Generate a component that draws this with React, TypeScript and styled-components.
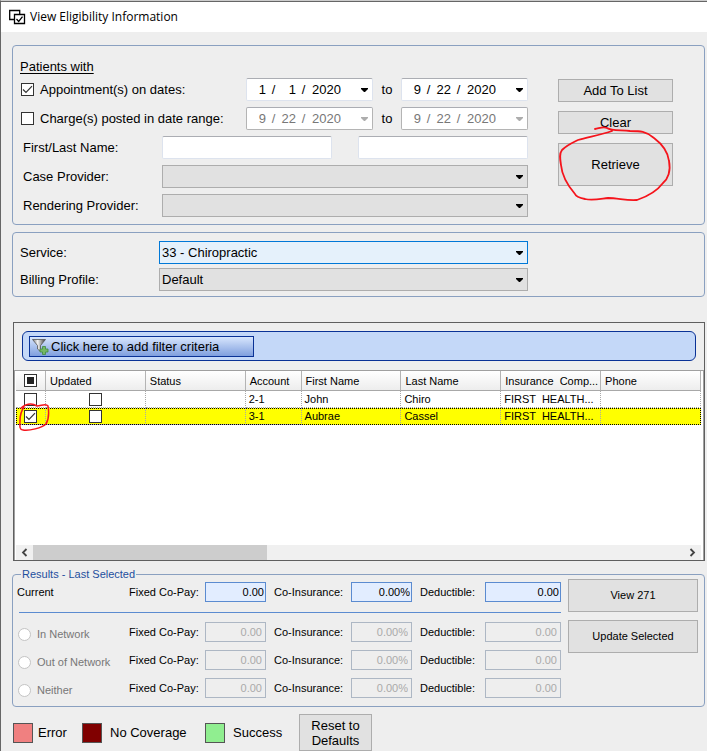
import React from 'react';
import styled, { createGlobalStyle } from 'styled-components';

const GlobalStyle = createGlobalStyle`
  *, *::before, *::after { box-sizing: border-box; }
  html, body { margin: 0; padding: 0; }
  body { background: #eee; color: #000; font: 13px/16px "Liberation Sans", Arial, sans-serif; }
  input, select, button { font: inherit; color: inherit; margin: 0; border-radius: 0; }
`;

/* ---------- window frame ---------- */

const Window = styled.div`
  display: flex;
  flex-direction: column;
  min-height: 100vh;
  border-left: 1px solid #666;
  border-top: 1px solid #ccc;
`;

const TitleBar = styled.header`
  display: flex;
  align-items: center;
  gap: 4px;
  height: 31px;
  padding-left: 8px;
  background: #fff;
  border-top: 1px solid #666;
`;

const Title = styled.h1`
  margin: 0;
  font: 400 12px/16px "Open Sans", "Noto Sans", sans-serif;
`;

const Body = styled.main`
  display: flex;
  flex-direction: column;
  flex: 1;
  padding: 13px 2px 0 11px;
`;

const Panel = styled.section`
  display: flex;
  border: 1px solid #8aa0c0;
  border-radius: 4px;
`;

/* ---------- form controls ---------- */

const Button = styled.button<{ $height: number; $small?: boolean }>`
  height: ${(p) => p.$height}px;
  padding: 0 6px;
  border: 1px solid #adadad;
  background: #e1e1e1;
  font-size: ${(p) => (p.$small ? 11 : 13)}px;
  line-height: 15px;
`;

const CheckWrap = styled.span`
  display: inline-grid;
  flex: none;
  width: 13px;
  height: 13px;
  vertical-align: top;
  > * { grid-area: 1 / 1; }
  > svg { pointer-events: none; }
`;

const CheckInput = styled.input`
  appearance: none;
  width: 13px;
  height: 13px;
  border: 1px solid #333;
  background: #fff;
`;

function CheckBox({ id, label, state }: { id?: string; label?: string; state?: 'on' | 'mixed' }) {
  return (
    <CheckWrap>
      <CheckInput type="checkbox" id={id} aria-label={label} defaultChecked={state === 'on'} />
      {state === 'on' && (
        <svg width="13" height="13" viewBox="0 0 13 13">
          <path d="M2 6.5 5 9.5 11 3.2" fill="none" stroke="#333" strokeWidth="1.2" />
        </svg>
      )}
      {state === 'mixed' && (
        <svg width="13" height="13" viewBox="0 0 13 13">
          <path d="M3 3h7v7H3z" fill="#222" />
        </svg>
      )}
    </CheckWrap>
  );
}

function DownArrow({ color = '#000' }: { color?: string }) {
  return (
    <svg width="7" height="4" viewBox="0 0 7 4">
      <path d="M0 0h7v1L4 4H3L0 1z" fill={color} />
    </svg>
  );
}

const SelectWrap = styled.div`
  display: grid;
  flex: 1;
  align-items: center;
  > * { grid-area: 1 / 1; }
  > svg { justify-self: end; margin-right: 5px; pointer-events: none; }
`;

const SelectBox = styled.select<{ $active?: boolean }>`
  appearance: none;
  width: 100%;
  height: 23px;
  padding: 0 20px 0 2px;
  border: 1px solid ${(p) => (p.$active ? '#0078d7' : '#adadad')};
  background: ${(p) => (p.$active ? '#e5f1fb' : '#e1e1e1')};
`;

function Select({ id, value = '', active }: { id: string; value?: string; active?: boolean }) {
  return (
    <SelectWrap>
      <SelectBox id={id} $active={active}>
        <option>{value}</option>
      </SelectBox>
      <DownArrow />
    </SelectWrap>
  );
}

const TextBox = styled.input`
  flex: 1;
  width: 0;
  min-width: 0;
  height: 23px;
  border: 1px solid #dde3ee;
  border-top-color: #abadb3;
  border-radius: 2px;
  background: #fff;
`;

const DateBox = styled.div<{ $disabled?: boolean }>`
  display: flex;
  align-items: center;
  flex: 1;
  height: 23px;
  padding: 0 4px;
  border: 1px solid ${(p) => (p.$disabled ? '#b4b4b4' : '#dde3ee')};
  border-top-color: #abadb3;
  border-radius: 2px;
  background: #fff;
  color: ${(p) => (p.$disabled ? '#777' : '#000')};
`;

const DatePart = styled.input<{ $width: number }>`
  width: ${(p) => p.$width}px;
  height: 19px;
  padding: 0;
  border: 0;
  background: transparent;
  text-align: right;
`;

const Slash = styled.span`
  width: 15px;
  text-align: center;
`;

const DropButton = styled.button`
  display: flex;
  align-items: center;
  margin-left: auto;
  padding: 0;
  border: 0;
  background: none;
`;

function DateField({ name, parts, disabled }: { name: string; parts: [string, string, string]; disabled?: boolean }) {
  return (
    <DateBox $disabled={disabled} role="group" aria-label={name}>
      <DatePart $width={15} defaultValue={parts[0]} disabled={disabled} aria-label={`${name} month`} />
      <Slash>/</Slash>
      <DatePart $width={15} defaultValue={parts[1]} disabled={disabled} aria-label={`${name} day`} />
      <Slash>/</Slash>
      <DatePart $width={30} defaultValue={parts[2]} disabled={disabled} aria-label={`${name} year`} />
      <DropButton disabled={disabled} aria-label={`${name} calendar`}>
        <DownArrow color={disabled ? '#adadad' : '#000'} />
      </DropButton>
    </DateBox>
  );
}

/* ---------- search criteria ---------- */

const Criteria = styled(Panel)`
  gap: 30px;
  height: 180px;
  padding: 12px 31px 0 7px;
`;

const CriteriaForm = styled.div`
  display: flex;
  flex-direction: column;
  flex: 1;
  gap: 6px;
  min-width: 0;
`;

const Heading = styled.h2`
  margin: 0 0 -3px;
  font-size: 13px;
  font-weight: 400;
  line-height: 17px;
  text-decoration: underline;
  text-underline-offset: 2px;
`;

const FormRow = styled.div`
  display: flex;
  align-items: center;
`;

const FieldLabel = styled.label<{ $width: number; $indent?: number }>`
  display: flex;
  align-items: center;
  flex: none;
  gap: 6px;
  width: ${(p) => p.$width}px;
  padding-left: ${(p) => p.$indent ?? 0}px;
  white-space: nowrap;
`;

const Between = styled.span`
  width: 28px;
  text-align: center;
`;

const NameGap = styled.span`
  width: 26px;
`;

const CriteriaActions = styled.div`
  display: flex;
  flex-direction: column;
  flex: none;
  gap: 9px;
  width: 115px;
  padding-top: 21px;
`;

const Marked = styled.div`
  position: relative;
  display: grid;
`;

const Scribble = styled.svg<{ $left: number; $top: number }>`
  position: absolute;
  left: ${(p) => p.$left}px;
  top: ${(p) => p.$top}px;
  pointer-events: none;
  fill: none;
  stroke: #f5141c;
  stroke-linecap: round;
  stroke-linejoin: round;
`;

const Service = styled(Panel)`
  flex-direction: column;
  gap: 4px;
  height: 65px;
  margin-top: 7px;
  padding: 8px 176px 0 7px;
`;

/* ---------- patient list ---------- */

const ListPanel = styled.section`
  display: flex;
  flex-direction: column;
  flex: 1;
  margin: 25px 0 0 1px;
  padding-top: 8px;
  border: 1px solid #5f5f5f;
`;

const FilterBar = styled.div`
  display: flex;
  height: 30px;
  margin: 0 8px 9px;
  padding: 4px 6px;
  border: 1px solid #0a3296;
  border-radius: 6px;
  background: #c4d8f8;
`;

const FilterButton = styled.button`
  display: flex;
  align-items: center;
  gap: 2px;
  width: 225px;
  height: 21px;
  padding: 0 2px;
  border: 1px solid #0a3296;
  background: linear-gradient(#d8e6fd, #7f9fde);
`;

const ListView = styled.div`
  display: flex;
  flex-direction: column;
  flex: 1;
  padding: 0 2px 0 1px;
  border-top: 1px solid #a0a0a0;
  border-left: 1px solid #a0a0a0;
  border-right: 1px solid #a0a0a0;
  background: #fff;
`;

const Table = styled.table`
  width: 100%;
  table-layout: fixed;
  border-collapse: separate;
  border-spacing: 0;
  font-size: 11px;
  line-height: 14px;
`;

const Th = styled.th<{ $center?: boolean }>`
  height: 20px;
  padding: 0 4px;
  border-right: 1px solid #b4b4b4;
  border-bottom: 1px solid #a8a8a8;
  background: linear-gradient(#fff, #ededed);
  font-weight: 400;
  text-align: ${(p) => (p.$center ? 'center' : 'left')};
  white-space: pre;
`;

const Td = styled.td<{ $center?: boolean }>`
  height: 17px;
  padding: 0 3px;
  border-right: 1px dotted #a8a8a8;
  border-bottom: 1px dotted #a8a8a8;
  text-align: ${(p) => (p.$center ? 'center' : 'left')};
  white-space: pre;
`;

const Tr = styled.tr<{ $selected: boolean }>`
  background: ${(p) => (p.$selected ? '#ff0' : '#fff')};
  outline: ${(p) => (p.$selected ? '1px dotted #000' : 'none')};
  outline-offset: -1px;
`;

const CellMark = styled.div`
  position: relative;
  height: 13px;
`;

const ScrollBar = styled.div`
  display: flex;
  height: 15px;
  margin-top: auto;
  background: #f0f0f0;
`;

const ScrollArrow = styled.button`
  display: flex;
  align-items: center;
  justify-content: center;
  width: 17px;
  padding: 0;
  border: 0;
  background: none;
`;

const ScrollTrack = styled.div`
  flex: 1;
`;

const ScrollThumb = styled.div`
  width: 36%;
  height: 100%;
  background: #cdcdcd;
`;

/* ---------- results ---------- */

const Results = styled.fieldset`
  display: flex;
  gap: 7px;
  min-width: 0;
  height: 140px;
  margin: 6px 0 0;
  padding: 0 6px 0 4px;
  border: 1px solid #8aa0c0;
  border-radius: 4px;
  font-size: 11px;
  line-height: 14px;
`;

const Legend = styled.legend`
  margin-left: 4px;
  padding: 0 1px;
  color: #1e4f9e;
`;

const ResultRows = styled.div`
  display: flex;
  flex-direction: column;
  flex: 1;
  gap: 8px;
  padding-top: 1px;
`;

const ResultRow = styled.div`
  display: grid;
  grid-template-columns: 112px 76px 61fr 85px 61fr 73px 76fr;
  align-items: center;
`;

const Divider = styled.hr`
  width: calc(100% - 2px);
  height: 1px;
  margin: 2px 0 1px 2px;
  border: 0;
  background: #5b8bd0;
`;

const RowName = styled.label<{ $muted?: boolean }>`
  display: flex;
  align-items: center;
  gap: 6px;
  padding-top: ${(p) => (p.$muted ? 4 : 0)}px;
  color: ${(p) => (p.$muted ? '#777' : '#000')};
`;

const Radio = styled.input`
  appearance: none;
  width: 13px;
  height: 13px;
  margin-left: 1px;
  border: 1px solid #c4c4c4;
  border-radius: 50%;
  background: #fff;
`;

const AmountLabel = styled.label<{ $indent?: boolean }>`
  padding-left: ${(p) => (p.$indent ? 8 : 0)}px;
  white-space: nowrap;
`;

const Amount = styled.input<{ $current?: boolean }>`
  width: 100%;
  height: 20px;
  padding: 0 ${(p) => (p.$current ? 1 : 3)}px;
  border: 1px solid ${(p) => (p.$current ? '#5b8bd0' : '#adb7c4')};
  background: ${(p) => (p.$current ? '#e2edff' : '#eee')};
  color: ${(p) => (p.$current ? '#000' : '#aaa')};
  text-align: right;
`;

const ResultActions = styled.div`
  display: flex;
  flex-direction: column;
  flex: none;
  gap: 8px;
  width: 130px;
  margin-top: -2px;
`;

/* ---------- footer ---------- */

const Footer = styled.footer`
  display: flex;
  align-items: center;
  margin-top: 7px;
  padding-left: 1px;
`;

const KeyItem = styled.div<{ $width: number; $gap: number }>`
  display: flex;
  align-items: center;
  gap: ${(p) => p.$gap}px;
  width: ${(p) => p.$width}px;
  white-space: nowrap;
`;

const Swatch = styled.span<{ $color: string }>`
  width: 20px;
  height: 20px;
  border: 1px solid #555;
  background: ${(p) => p.$color};
`;

const ResetButton = styled(Button)`
  width: 73px;
`;

const patients = [
  { account: '2-1', first: 'John', last: 'Chiro', insurance: 'FIRST  HEALTH...', selected: false },
  { account: '3-1', first: 'Aubrae', last: 'Cassel', insurance: 'FIRST  HEALTH...', selected: true },
];

const columns: [string, number][] = [
  ['', 30], ['Updated', 100], ['Status', 100], ['Account', 56],
  ['First Name', 100], ['Last Name', 100], ['Insurance  Comp...', 100], ['Phone', 100],
];
const totalWidth = columns.reduce((sum, c) => sum + c[1], 0);

const Col = styled.col<{ $share: number }>`
  width: ${(p) => p.$share * 100}%;
`;

function Amounts({ row, current }: { row: string; current?: boolean }) {
  const fields: [string, string][] = [['Fixed Co-Pay:', '0.00'], ['Co-Insurance:', '0.00%'], ['Deductible:', '0.00']];
  return (
    <>
      {fields.map(([label, value], i) => (
        <React.Fragment key={label}>
          <AmountLabel htmlFor={`${row}-${i}`} $indent={i > 0}>{label}</AmountLabel>
          <Amount id={`${row}-${i}`} defaultValue={value} $current={current} disabled={!current} />
        </React.Fragment>
      ))}
    </>
  );
}

export default function App() {
  return (
    <>
      <GlobalStyle />
      <Window>
        <TitleBar>
          <svg width="17" height="17" viewBox="0 0 17 17" fill="#fff" stroke="#000" strokeWidth="1.3">
            <path d="M0.7 1.5h10v9h-10z" />
            <path d="M5.500 5.500h10v9h-10z" />
            <path d="m7.500 10 2.200 2.400L13.500 7.600" fill="none" />
          </svg>
          <Title>View Eligibility Information</Title>
        </TitleBar>
        <Body>
          <Criteria>
            <CriteriaForm>
              <Heading>Patients with</Heading>
              <FormRow>
                <FieldLabel $width={226} $indent={1}>
                  <CheckBox state="on" />
                  Appointment(s) on dates:
                </FieldLabel>
                <DateField name="Appointments from" parts={['1', '1', '2020']} />
                <Between>to</Between>
                <DateField name="Appointments to" parts={['9', '22', '2020']} />
              </FormRow>
              <FormRow>
                <FieldLabel $width={226} $indent={1}>
                  <CheckBox />
                  Charge(s) posted in date range:
                </FieldLabel>
                <DateField name="Charges from" parts={['9', '22', '2020']} disabled />
                <Between>to</Between>
                <DateField name="Charges to" parts={['9', '22', '2020']} disabled />
              </FormRow>
              <FormRow>
                <FieldLabel $width={142} $indent={3} htmlFor="first-name">First/Last Name:</FieldLabel>
                <TextBox id="first-name" />
                <NameGap />
                <TextBox aria-label="Last name" />
              </FormRow>
              <FormRow>
                <FieldLabel $width={142} $indent={3} htmlFor="case-provider">Case Provider:</FieldLabel>
                <Select id="case-provider" />
              </FormRow>
              <FormRow>
                <FieldLabel $width={142} $indent={3} htmlFor="rendering-provider">Rendering Provider:</FieldLabel>
                <Select id="rendering-provider" />
              </FormRow>
            </CriteriaForm>
            <CriteriaActions>
              <Button $height={23}>Add To List</Button>
              <Button $height={23}>Clear</Button>
              <Marked>
                <Button $height={43}>Retrieve</Button>
                <Scribble $left={0} $top={-18} width="116" height="80" viewBox="0 0 116 80" strokeWidth="1.8">
                  <path d="M37 4C42 3 46 1 49 3C53 6 62 5 72 6C82 6 88 6 96 13C104 19 110 27 111 36C113 46 110 54 105 58C99 66 88 72 79 75C69 76 60 73 50 73C42 74 34 76 27 74C22 73 18 72 17 69C11 62 4 51 3 40C2 34 1 29 4 25C9 20 14 18 20 15C30 12 43 10 54 6" />
                </Scribble>
              </Marked>
            </CriteriaActions>
          </Criteria>

          <Service>
            <FormRow>
              <FieldLabel $width={139} htmlFor="service">Service:</FieldLabel>
              <Select id="service" value="33 - Chiropractic" active />
            </FormRow>
            <FormRow>
              <FieldLabel $width={139} htmlFor="billing-profile">Billing Profile:</FieldLabel>
              <Select id="billing-profile" value="Default" />
            </FormRow>
          </Service>

          <ListPanel>
            <FilterBar>
              <FilterButton>
                <svg width="17" height="17" viewBox="0 0 17 17">
                  <defs>
                    <linearGradient id="funnel" x1="0" x2="1">
                      <stop offset="0" stopColor="#777" />
                      <stop offset="0.4" stopColor="#f4f4f4" />
                      <stop offset="1" stopColor="#333" />
                    </linearGradient>
                  </defs>
                  <path d="M0.5 1.5h13l-5 6v6L5.500 11V7.500z" fill="url(#funnel)" stroke="#555" strokeWidth="0.800" />
                  <path d="M10.500 8.500h3v2.500h2.500v3h-2.500v2.500h-3V14H8v-3h2.500z" fill="#74b765" stroke="#3f8a40" strokeWidth="0.800" />
                </svg>
                Click here to add filter criteria
              </FilterButton>
            </FilterBar>
            <ListView>
              <Table>
                <colgroup>
                  {columns.map(([name, width]) => <Col key={name} $share={width / totalWidth} />)}
                </colgroup>
                <thead>
                  <tr>
                    <Th $center><CheckBox label="Select all" state="mixed" /></Th>
                    {columns.slice(1).map(([name]) => <Th key={name}>{name}</Th>)}
                  </tr>
                </thead>
                <tbody>
                  {patients.map((p) => (
                    <Tr key={p.account} $selected={p.selected}>
                      <Td $center>
                        <CellMark>
                          <CheckBox label={`Select ${p.first}`} state={p.selected ? 'on' : undefined} />
                          {p.selected && (
                            <Scribble $left={0} $top={-8} width="32" height="30" viewBox="0 0 32 30" strokeWidth="1.500">
                              <path d="M2 6C7 2 13 1 18 4C22 4 27 1 29 4C30 10 30 17 27 22C23 26 10 29 4 28C0 28 1 23 1 19C1 13 2 9 5 5" />
                            </Scribble>
                          )}
                        </CellMark>
                      </Td>
                      <Td $center><CellMark><CheckBox label={`${p.first} updated`} /></CellMark></Td>
                      <Td />
                      <Td>{p.account}</Td>
                      <Td>{p.first}</Td>
                      <Td>{p.last}</Td>
                      <Td>{p.insurance}</Td>
                      <Td />
                    </Tr>
                  ))}
                </tbody>
              </Table>
              <ScrollBar>
                <ScrollArrow aria-label="Scroll left">
                  <svg width="7" height="9" viewBox="0 0 7 9"><path d="M5.500 1 2 4.500 5.500 8" fill="none" stroke="#444" strokeWidth="1.800" /></svg>
                </ScrollArrow>
                <ScrollTrack><ScrollThumb /></ScrollTrack>
                <ScrollArrow aria-label="Scroll right">
                  <svg width="7" height="9" viewBox="0 0 7 9"><path d="M1.500 1 5 4.500 1.500 8" fill="none" stroke="#444" strokeWidth="1.800" /></svg>
                </ScrollArrow>
              </ScrollBar>
            </ListView>
          </ListPanel>

          <Results>
            <Legend>Results - Last Selected</Legend>
            <ResultRows>
              <ResultRow>
                <RowName as="span">Current</RowName>
                <Amounts row="current" current />
              </ResultRow>
              <Divider />
              {['In Network', 'Out of Network', 'Neither'].map((name) => (
                <ResultRow key={name}>
                  <RowName $muted><Radio type="radio" name="network" disabled />{name}</RowName>
                  <Amounts row={name.replace(/ /g, '-')} />
                </ResultRow>
              ))}
            </ResultRows>
            <ResultActions>
              <Button $height={33} $small>View 271</Button>
              <Button $height={33} $small>Update Selected</Button>
            </ResultActions>
          </Results>

          <Footer>
            <KeyItem $width={69} $gap={5}><Swatch $color="#f08080" />Error</KeyItem>
            <KeyItem $width={123} $gap={8}><Swatch $color="#800000" />No Coverage</KeyItem>
            <KeyItem $width={94} $gap={8}><Swatch $color="#90ee90" />Success</KeyItem>
            <ResetButton $height={37}>Reset to<br />Defaults</ResetButton>
          </Footer>
        </Body>
      </Window>
    </>
  );
}
